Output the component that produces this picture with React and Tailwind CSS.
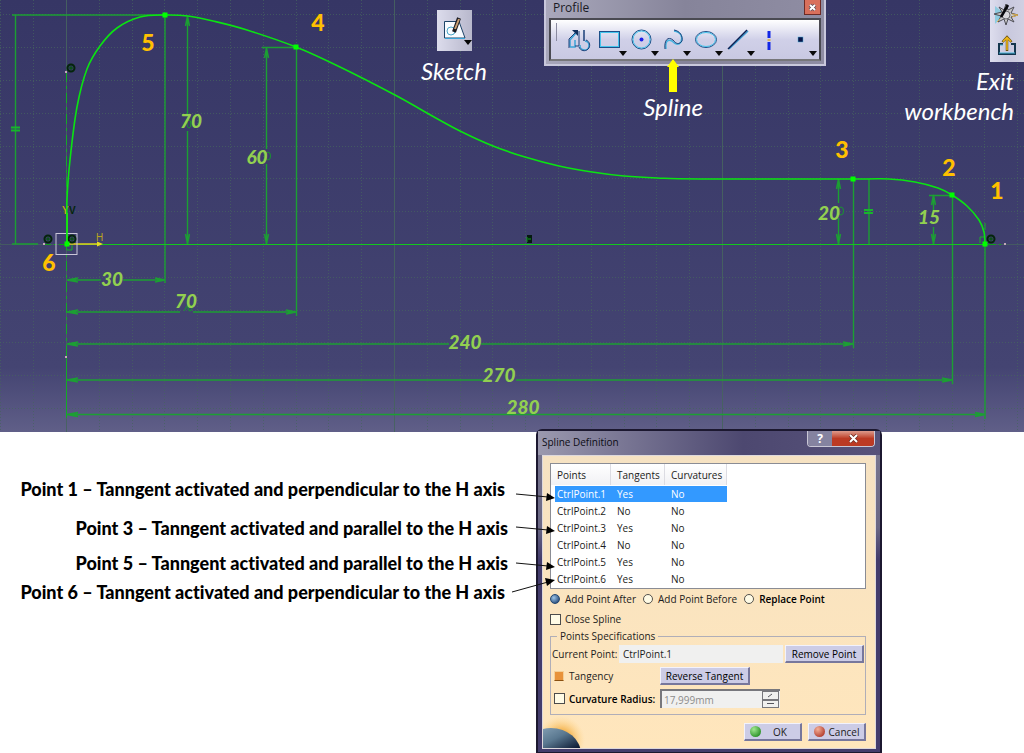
import { clsx } from 'clsx';

const STEP = 32.8;
const ORIGIN = { x: 67, y: 244 };

const curve = [
  [67, 244], [67, 200], [70, 160], [77, 107], [87, 69], [100, 46], [117, 28], [140, 17], [165, 15],
  [188, 16], [213, 21], [247, 30], [296, 47], [340, 67], [395, 95], [427, 113], [460, 131],
  [493, 146], [525, 157], [559, 166], [592, 172], [624, 176], [657, 178], [700, 179], [853, 179],
  [889, 179], [915, 182], [938, 188], [952, 195], [967, 206], [979, 220], [984, 232], [985, 244],
];

const controlPoints = [[165, 15], [296, 47], [853, 179], [952, 195], [985, 244], [67, 244]];

const pointNumbers = [
  { n: 1, x: 997, y: 199 },
  { n: 2, x: 949, y: 176 },
  { n: 3, x: 842, y: 158 },
  { n: 4, x: 318, y: 31 },
  { n: 5, x: 148, y: 51 },
  { n: 6, x: 49, y: 271 },
];

const dimensions = [
  { value: 30, x: 112, y: 286 },
  { value: 70, x: 186, y: 308 },
  { value: 240, x: 465, y: 349 },
  { value: 270, x: 499, y: 382 },
  { value: 280, x: 523, y: 414 },
  { value: 70, x: 191, y: 128 },
  { value: 60, x: 257, y: 164 },
  { value: 20, x: 829, y: 220 },
  { value: 15, x: 929, y: 224 },
];

// Catmull-Rom through the sampled points
function smoothPath(pts) {
  let d = `M${pts[0][0]} ${pts[0][1]}`;
  for (let i = 0; i < pts.length - 1; i++) {
    const p0 = pts[i - 1] || pts[i];
    const p1 = pts[i];
    const p2 = pts[i + 1];
    const p3 = pts[i + 2] || p2;
    // long straight piece, keep it flat
    if (p2[0] - p1[0] > 100) {
      d += `L${p2[0]} ${p2[1]}`;
      continue;
    }
    d += `C${p1[0] + (p2[0] - p0[0]) / 6} ${p1[1] + (p2[1] - p0[1]) / 6} ${p2[0] - (p3[0] - p1[0]) / 6} ${p2[1] - (p3[1] - p1[1]) / 6} ${p2[0]} ${p2[1]}`;
  }
  return d;
}

function HDim({ x1, x2, y, gap }) {
  return (
    <path
      d={`M${x1} ${y}H${gap ? gap[0] : x2}${gap ? `M${gap[1]} ${y}H${x2}` : ''}M${x1 + 11} ${y - 2}L${x1} ${y}L${x1 + 11} ${y + 2}M${x2 - 10} ${y - 2}L${x2} ${y}L${x2 - 10} ${y + 2}`}
    />
  );
}

function VDim({ x, y1, y2, gap }) {
  return (
    <path
      d={`M${x} ${y1}V${gap[0]}M${x} ${gap[1]}V${y2}M${x - 2} ${y1 + 10}L${x} ${y1}L${x + 2} ${y1 + 10}M${x - 2} ${y2 - 10}L${x} ${y2}L${x + 2} ${y2 - 10}`}
    />
  );
}

function Drawing() {
  const cols = Array.from({ length: 32 }, (_, i) => i - 2);
  const rows = Array.from({ length: 13 }, (_, i) => i - 7);

  return (
    <svg viewBox="0 0 1024 432" className="block w-full" role="img" aria-label="Sketch with spline through six points">
      {/* Grid */}
      <g stroke="#46635f" strokeWidth="1" fill="none">
        {cols.map(i => (
          <path key={i} d={`M${Math.round(ORIGIN.x + i * STEP) - 0.5} 0V432`} strokeDasharray={i % 10 === 0 ? undefined : '1 2'} opacity={i % 10 === 0 ? 0.9 : 0.75} />
        ))}
        {rows.map(i => (
          <path key={i} d={`M0 ${Math.round(ORIGIN.y + i * STEP) + 0.5}H1024`} strokeDasharray={i === 0 ? undefined : '1 2'} opacity="0.75" />
        ))}
      </g>

      {/* Dimension lines */}
      <g stroke="#1c9f33" strokeWidth="1.400" fill="none">
        <path d="M12 15H165M15.500 15V244M12 244H38" />
        <path d="M165 15V283M296.500 47V316M262 47.500H296" />
        <path d="M853.500 179V348M952.500 195V384M985 244V419" />
        <path d="M869 179V244M929 195.500H952" />
        <path d="M11 127.500H20M11 130.500H20M864 210H873M864 213H873" stroke="#17b52c" strokeWidth="2" />
        <HDim x1={67} x2={165} y={280} gap={[101, 123]} />
        <HDim x1={67} x2={296} y={312} gap={[180, 193]} />
        <HDim x1={67} x2={853} y={344} gap={[449, 481]} />
        <HDim x1={67} x2={952} y={380} gap={[483, 516]} />
        <HDim x1={67} x2={985} y={414.5} />
        <VDim x={187.5} y1={16} y2={244} gap={[114, 131]} />
        <VDim x={266.5} y1={48} y2={244} gap={[149, 164]} />
        <VDim x={838.5} y1={179} y2={244} gap={[203, 218]} />
        <VDim x={933.5} y1={195} y2={244} gap={[210, 227]} />
      </g>
      <g stroke="#189630" fill="none">
        <ellipse cx="189" cy="124" rx="2" ry="4" />
        <ellipse cx="268" cy="156" rx="2.500" ry="4" />
        <ellipse cx="841" cy="211" rx="2.500" ry="4" />
        <path d="M184 311L187 306" />
        <ellipse cx="190" cy="308" rx="2" ry="3" />
      </g>

      {/* Axes */}
      <path d="M78 244.500H985" stroke="#12c81c" fill="none" />
      <path d="M43 244.500H67M988 244.500H1004" stroke="#12a01c" strokeDasharray="8 3 2 3" fill="none" />
      <path d="M66.500 72V357" stroke="#14aa26" strokeDasharray="10 4 3 4" fill="none" />
      <path d="M66.500 350V418" stroke="#14aa26" fill="none" />
      <path d="M67 213V244" stroke="#3fe012" strokeWidth="2" />
      <path d="M67 244H100" stroke="#e6d020" strokeWidth="1.500" />
      <path d="M97 241.500L103 244L97 246.500Z" fill="#e6e020" />
      <rect x="56" y="233.500" width="21" height="21" fill="none" stroke="#c9c6d8" />
      <path d="M67 250H72V245M980 243V237H985M985 223V230" stroke="#18b02a" fill="none" />
      <g fill="#c2aab8">
        <rect x="65" y="71" width="2" height="2" />
        <rect x="65" y="356" width="2" height="2" />
        <rect x="43" y="243" width="2" height="2" />
        <rect x="1004" y="243" width="2" height="2" />
      </g>
      {[[71, 68], [48, 239], [72, 239], [991, 239]].map(([x, y]) => (
        <g key={`${x}-${y}`} fill="none" stroke="#04250b" strokeWidth="2">
          <circle cx={x} cy={y} r="3.500" />
          <circle cx={x} cy={y} r="1" stroke="#0a5018" strokeWidth="1.500" />
        </g>
      ))}
      <rect x="527" y="235" width="5" height="8" fill="#051a10" />
      <path d="M527 237V242M528 239H531" stroke="#12a01c" />
      <g fontSize="10" fontFamily="Liberation Sans, sans-serif" fontWeight="bold">
        <text x="62" y="214" fill="#b9a31d">Y</text>
        <text x="69" y="214" fill="#04250b">V</text>
        <text x="96" y="241" fill="#b9a31d" fontWeight="normal">H</text>
      </g>

      {/* Spline */}
      <path d={smoothPath(curve)} fill="none" stroke="#0be312" strokeWidth="1.600" />
      {controlPoints.map(([x, y]) => (
        <rect key={x} x={x - 2.5} y={y - 2.5} width="5" height="5" fill="#00ff00" />
      ))}

      <g textAnchor="middle" fontFamily="Lato, sans-serif">
        {dimensions.map(d => (
          <text key={`${d.value}-${d.x}`} x={d.x} y={d.y} fontSize="19" fontStyle="italic" fontWeight="900" fill="#92d050">{d.value}</text>
        ))}
        {pointNumbers.map(p => (
          <text key={p.n} x={p.x} y={p.y} fontSize="23" fontWeight="900" fill="#ffc000">{p.n}</text>
        ))}
      </g>
    </svg>
  );
}

const profileTools = [
  {
    name: 'Profile',
    icon: (
      <>
        <path d="M6 25V18L12 11M6 25H11V18" stroke="#3ba4d8" fill="none" strokeWidth="1.500" />
        <path d="M5 26V17L12 10M15 9V24H11" stroke="#1b3f78" fill="none" />
        <path d="M8 8H14V14Z" fill="#12305f" />
        <path d="M20 8V19" stroke="#1b3f78" strokeWidth="1.500" />
        <path d="M21 19A4.500 4.500 0 1 1 16 23" stroke="#3ba4d8" fill="none" strokeWidth="1.500" />
        <path d="M22 18A5.500 5.500 0 1 1 15 25" stroke="#1b3f78" fill="none" />
      </>
    ),
  },
  {
    name: 'Rectangle',
    menu: true,
    icon: (
      <>
        <rect x="3.500" y="9.500" width="20" height="16" fill="none" stroke="#1d4f88" />
        <rect x="4.500" y="10.500" width="18" height="14" fill="none" stroke="#45c4ec" />
      </>
    ),
  },
  {
    name: 'Circle',
    menu: true,
    icon: (
      <>
        <circle cx="13.500" cy="17.500" r="9.500" fill="none" stroke="#1d4f88" />
        <circle cx="13.500" cy="17.500" r="8.500" fill="none" stroke="#45c4ec" />
        <circle cx="13.500" cy="17.500" r="2" fill="#1c22ea" />
      </>
    ),
  },
  {
    name: 'Spline',
    menu: true,
    icon: (
      <>
        <path d="M6 27C5 19 8 17 12 19C15 22 18 24 21 20C23 15 21 10 14 9" fill="none" stroke="#45b4e0" strokeWidth="1.500" />
        <path d="M5 27C4 18 8 14 13 18C16 22 19 23 22 19C23 14 20 9 14 8" fill="none" stroke="#1b3f78" />
      </>
    ),
  },
  {
    name: 'Ellipse',
    menu: true,
    icon: (
      <>
        <ellipse cx="14" cy="17.500" rx="10.500" ry="8" fill="none" stroke="#1d4f88" />
        <ellipse cx="14" cy="17.500" rx="9.500" ry="7" fill="none" stroke="#45c4ec" />
      </>
    ),
  },
  {
    name: 'Line',
    menu: true,
    icon: (
      <>
        <path d="M5 27L24 9" stroke="#3a9bd0" strokeWidth="1.500" />
        <path d="M4 27L23 8" stroke="#0b1f52" strokeWidth="1.500" />
      </>
    ),
  },
  {
    name: 'Axis',
    icon: (
      <>
        <path d="M13 9V16M13 20V28" stroke="#1226e6" strokeWidth="3" />
        <path d="M13 17V19" stroke="#d8b060" strokeWidth="3" />
      </>
    ),
  },
  {
    name: 'Point',
    menu: true,
    icon: <rect x="10" y="15" width="5" height="5" fill="#08164a" stroke="#4fb0dc" strokeWidth="0.500" />,
  },
];

function ProfileToolbar() {
  return (
    <div className="flex h-[66px] flex-col border-2 border-t-0 border-[#c9c8dc] bg-linear-to-r from-[#a9a8bb] via-[#86849a] to-[#8f8da3] px-[3px] pb-[3px]">
      <div className="flex h-[18px] items-start justify-between pl-1">
        <h2 className="font-['Open_Sans',sans-serif] text-[12px] leading-4 text-[#1a1a24]">Profile</h2>
        <button aria-label="Close Profile" className="flex h-[15px] w-[17px] items-center justify-center border border-t-0 border-[#6d2b26] bg-[#d9705c]">
          <svg width="9" height="9" viewBox="0 0 9 9"><path d="M2 2L7 7M7 2L2 7" stroke="#5a4a56" strokeWidth="3.500" /><path d="M2 2L7 7M7 2L2 7" stroke="#fff" strokeWidth="2" /></svg>
        </button>
      </div>
      <div className="flex flex-1 border-2 border-[#4a4a52] border-b-[#77777a] bg-linear-to-b from-white via-[#d0d0e8] to-[#c9c9e2] pt-[2px] pl-[5px]">
        <span className="mt-[1px] mr-[7px] h-[18px] w-[2px] border-r border-[#8a8aa0] bg-white" />
        {profileTools.map(t => (
          <button key={t.name} title={t.name} aria-label={t.name} className="h-9 w-8 shrink-0">
            <svg width="32" height="36" viewBox="0 0 32 36">
              {t.icon}
              {t.menu && <path d={t.name === 'Point' ? 'M21 29H29L25 34Z' : 'M23 29H31L27 34Z'} fill="#0a0a0a" />}
            </svg>
          </button>
        ))}
      </div>
    </div>
  );
}

function SketchButton() {
  return (
    <button aria-label="Sketch" className="h-[41px] w-[35px] bg-linear-to-r from-[#dcdcec] to-[#b8b8cc]">
      <svg width="35" height="41" viewBox="0 0 35 41">
        <path d="M7.500 11.500H22L28 28H7.500Z" fill="#f8fbff" stroke="#1d4468" />
        <path d="M8 28.500H28" stroke="#3ba4d8" />
        <circle cx="14" cy="21" r="4" fill="none" stroke="#4aa6c8" />
        <path d="M17 22L22 8" stroke="#1a1a20" strokeWidth="4" />
        <path d="M18 19L22 9" stroke="#c99f74" strokeWidth="2" />
        <path d="M27 30H35L31 35Z" fill="#050505" />
      </svg>
    </button>
  );
}

function WorkbenchTools() {
  return (
    <div className="flex h-[62px] w-[34px] flex-col bg-linear-to-r from-[#dedeee] via-[#c8c8de] to-[#d0d0e2]">
      <button aria-label="Sketcher" className="h-8">
        <svg width="34" height="32" viewBox="0 0 34 32">
          <path d="M5 6L15 14L5 24Z" fill="#8fcbe0" />
          <path d="M16 4L18 10L24 7L21 13L28 15L21 17L24 22L18 19L16 25L14 19L8 22L11 16L4 14L12 12L9 7L14 10Z" fill="#c8c8c8" stroke="#4c4c54" />
          <circle cx="16" cy="15" r="4" fill="#d8d8dc" stroke="#66666c" />
          <path d="M22 14L28 15L22 17M10 19L7 22" stroke="#d8ac48" fill="none" />
          <path d="M11 17L18 5" stroke="#08080c" strokeWidth="2.500" />
        </svg>
      </button>
      <button aria-label="Exit workbench" className="h-[30px]">
        <svg width="34" height="30" viewBox="0 0 34 30">
          <path d="M13 12H9V22H25V12H21" fill="none" stroke="#14364e" strokeWidth="2" />
          <path d="M13 13H10M9 21H25" stroke="#49b8dc" />
          <path d="M17 19V6M12.500 10L17 5L21.500 10" fill="none" stroke="#6b5210" strokeWidth="2.500" />
          <path d="M17 18V6M13 9.500L17 5.500L21 9.500" fill="none" stroke="#f0b818" strokeWidth="1.500" />
        </svg>
      </button>
    </div>
  );
}

const rows = [
  { name: 'CtrlPoint.1', tangent: 'Yes', curvature: 'No' },
  { name: 'CtrlPoint.2', tangent: 'No', curvature: 'No' },
  { name: 'CtrlPoint.3', tangent: 'Yes', curvature: 'No' },
  { name: 'CtrlPoint.4', tangent: 'No', curvature: 'No' },
  { name: 'CtrlPoint.5', tangent: 'Yes', curvature: 'No' },
  { name: 'CtrlPoint.6', tangent: 'Yes', curvature: 'No' },
];

const btn = 'flex h-[18px] items-center justify-center border-t border-l border-r-2 border-b-2 border-t-[#f2f2fc] border-l-[#f2f2fc] border-r-[#77779c] border-b-[#77779c] bg-[#cccce6] whitespace-nowrap';
const checkbox = 'size-[11px] shrink-0 appearance-none border border-[#4c4c4c] bg-[#fffbe6]';

function Radio({ label, checked, bold }) {
  return (
    <label className={clsx('flex items-center gap-[5px] whitespace-nowrap', bold && 'font-semibold text-black')}>
      <input
        type="radio"
        name="insert-mode"
        defaultChecked={checked}
        className="size-[10px] appearance-none rounded-full border border-[#55524c] bg-[#fffbe6] checked:border-[#23466e] checked:bg-radial-[at_35%_35%] checked:from-[#9cc4e8] checked:to-[#0d2f60]"
      />
      {label}
    </label>
  );
}

function SplineDialog() {
  return (
    <section aria-label="Spline Definition" className="w-[346px] rounded-t-md border-2 border-[#1c1830] bg-linear-to-b from-[#7c7a92] via-[#6a6784] via-30% to-[#433c6c] to-40% px-1 pb-[3px] font-['Open_Sans',sans-serif] text-[10px] leading-4 font-medium text-[#1c1c20]">
      <header className="-mx-1 flex h-6 items-start justify-between bg-linear-to-r from-[#9b99ae] via-[#4d4870] via-60% to-[#57527a] pl-1">
        <h2 className="pt-[3px] text-[#0c0c14]">Spline Definition</h2>
        <div className="mr-[5px] flex h-4 overflow-hidden rounded-b border border-t-0 border-[#c9c7d6] text-white">
          <button aria-label="Help" className="w-6 bg-[#8583a0] text-[12px] leading-4 font-bold">?</button>
          <button aria-label="Close" className="flex w-[42px] items-center justify-center bg-linear-to-b from-[#dd9a8c] to-[#bc3a24] to-50%">
            <svg width="11" height="9" viewBox="0 0 11 9"><path d="M2 1L9 8M9 1L2 8" stroke="#6d2c24" strokeWidth="3.500" /><path d="M2 1L9 8M9 1L2 8" stroke="#fff" strokeWidth="2" /></svg>
          </button>
        </div>
      </header>

      <div className="relative border border-[#ddd8dc] bg-linear-to-b from-[#f6e2c2] to-[#ffe6bc] pt-[7px] pr-[9px] pb-[7px] pl-[7px]">
        <div className="h-[126px] border border-[#8a8c94] bg-white">
          <table className="border-separate border-spacing-0 text-left">
            <thead>
              <tr className="h-[21px] bg-linear-to-b from-white to-[#f1f1f4]">
                <th className="w-[60px] border-r border-[#dcdce2] p-0 pl-[6px] font-medium">Points</th>
                <th className="w-[54px] border-r border-[#dcdce2] p-0 pl-[6px] font-medium">Tangents</th>
                <th className="w-[62px] border-r border-[#dcdce2] p-0 pl-[6px] font-medium">Curvatures</th>
              </tr>
            </thead>
            <tbody>
              {rows.map((r, i) => (
                <tr key={r.name} className={clsx('h-[17px]', i === 0 && 'text-white')}>
                  <td className="p-0 pl-1"><span className={clsx('block pl-[2px]', i === 0 && 'bg-[#3399ff]')}>{r.name}</span></td>
                  <td className="p-0"><span className={clsx('block pl-[6px]', i === 0 && 'bg-[#3399ff]')}>{r.tangent}</span></td>
                  <td className="p-0"><span className={clsx('block pl-[6px]', i === 0 && 'bg-[#3399ff]')}>{r.curvature}</span></td>
                </tr>
              ))}
            </tbody>
          </table>
        </div>

        <div className="mt-[2px] flex gap-[7px]">
          <Radio label="Add Point After" checked />
          <Radio label="Add Point Before" />
          <Radio label="Replace Point" bold />
        </div>

        <label className="mt-1 flex items-center gap-1">
          <input type="checkbox" className={checkbox} />
          Close Spline
        </label>

        <fieldset className="mt-[1px] h-[87px] border border-[#b0aeb8] pt-[1px] pr-[1px] pl-[1px]">
          <legend className="ml-[5px] px-[3px]">Points Specifications</legend>
          <div className="flex items-center gap-[2px]">
            <label htmlFor="current-point" className="w-[65px] shrink-0 whitespace-nowrap">Current Point:</label>
            <input id="current-point" readOnly defaultValue="CtrlPoint.1" className="h-[18px] min-w-0 flex-1 bg-[#f0f0ef] pl-1" />
            <button className={clsx(btn, 'w-[79px] text-black')}>Remove Point</button>
          </div>
          <div className="mt-1 flex items-center">
            <label className="flex w-[108px] items-center gap-[5px] pl-[2px]">
              <input type="checkbox" defaultChecked className="size-[10px] appearance-none border border-[#f4cf98] border-b-[#8a4f10] bg-[#e8923a]" />
              Tangency
            </label>
            <button className={clsx(btn, 'w-[90px] text-black')}>Reverse Tangent</button>
          </div>
          <div className="mt-1 flex items-center">
            <label className="flex w-[108px] items-center gap-1 pl-[2px] font-semibold whitespace-nowrap text-black">
              <input type="checkbox" className={checkbox} />
              Curvature Radius:
            </label>
            <div className="flex h-[19px] w-[120px] border-t-2 border-l-2 border-[#77777c] bg-[#f0f0ef]">
              <input aria-label="Curvature radius value" disabled defaultValue="17,999mm" className="w-[100px] pl-[2px] text-[#8c8c8c]" />
              <span className="flex w-[17px] flex-col">
                <button aria-label="Increase" className="flex-1 border border-[#77777c] text-[0px]"><svg className="mx-auto" width="7" height="5" viewBox="0 0 7 5"><path d="M1 4L5 1" stroke="#55555c" /></svg></button>
                <button aria-label="Decrease" className="flex-1 border border-[#77777c] text-[0px]"><svg className="mx-auto" width="7" height="5" viewBox="0 0 7 5"><path d="M0 2.500H7" stroke="#55555c" /></svg></button>
              </span>
            </div>
          </div>
        </fieldset>

        <div className="mt-2 flex justify-end gap-[6px]">
          <button className={clsx(btn, 'w-[58px] gap-3 pr-2')}>
            <span className="size-[11px] rounded-full bg-radial-[at_35%_30%] from-[#a0e890] to-[#087808]" />
            OK
          </button>
          <button className={clsx(btn, 'w-[58px] gap-1')}>
            <span className="size-[11px] rounded-full bg-radial-[at_35%_30%] from-[#f4b098] to-[#a01c10]" />
            Cancel
          </button>
        </div>

        <svg className="absolute bottom-0 left-0" width="44" height="34" viewBox="0 0 44 34">
          <defs>
            <radialGradient id="glow" cx="0.500" cy="0.500" r="0.500">
              <stop offset="0.400" stopColor="#f4b450" />
              <stop offset="1" stopColor="#ffd890" stopOpacity="0" />
            </radialGradient>
            <linearGradient id="planet" x1="0" y1="0" x2="0.600" y2="1">
              <stop offset="0" stopColor="#9ab4c8" />
              <stop offset="0.400" stopColor="#5a7890" />
              <stop offset="0.700" stopColor="#0c1a34" />
            </linearGradient>
          </defs>
          <circle cx="18" cy="26" r="24" fill="url(#glow)" />
          <ellipse cx="8" cy="40" rx="30" ry="26" fill="url(#planet)" />
        </svg>
      </div>
    </section>
  );
}

export default function App() {
  return (
    <main className="min-h-screen overflow-hidden bg-white font-[Lato,sans-serif] [font-variant-ligatures:none]">
      <div className="relative bg-linear-to-b from-[#363665] via-[#444472] via-85% to-[#605f88]">
        <Drawing />

        <div className="absolute top-[10px] left-[421px] flex flex-col items-center text-[24px] leading-[30px] text-white italic">
          <SketchButton />
          <span className="mt-[5px]">Sketch</span>
        </div>

        <div className="absolute top-0 left-[544px] w-[282px]">
          <ProfileToolbar />
          <div className="-mt-[7px] flex flex-col items-center pr-[24px] text-[24px] leading-[30px] text-white italic">
            <svg width="12" height="33" viewBox="0 0 12 33"><path d="M6 0L12 8H10V33H2V8H0Z" fill="#ffff00" /></svg>
            <span>Spline</span>
          </div>
        </div>

        <div className="absolute top-0 right-0 flex flex-col items-end text-right text-[24px] leading-[30px] text-white italic">
          <WorkbenchTools />
          <p className="mt-1 pr-[10px]">Exit<br />workbench</p>
        </div>
      </div>

      <div className="relative -mt-[3px] flex">
        <div className="w-[536px] shrink-0 pt-[46px] pr-[28px] text-right text-[18px] leading-[28px] font-black whitespace-nowrap text-black">
          <p className="pr-[3px]">Point 1 – Tanngent activated and perpendicular to the H axis</p>
          <p className="mt-[11px]">Point 3 – Tanngent activated and parallel to the H axis</p>
          <p className="mt-[7px]">Point 5 – Tanngent activated and parallel to the H axis</p>
          <p className="mt-[1px] pr-[3px]">Point 6 – Tanngent activated and perpendicular to the H axis</p>
        </div>
        <SplineDialog />

        {/* Callout arrows from notes to table rows */}
        <svg className="pointer-events-none absolute top-[57px] left-[508px]" width="50" height="112" viewBox="0 0 50 112">
          <g stroke="#111" fill="none">
            <path d="M8 8L40 11M8 41L40 44M8 77L40 80M4 106L40 96" />
          </g>
          <g fill="#000">
            <path d="M39 7L47 12L38 15ZM39 40L47 45L38 48ZM39 76L47 81L38 84ZM37 92L47 94L39 100Z" />
          </g>
        </svg>
      </div>
    </main>
  );
}
